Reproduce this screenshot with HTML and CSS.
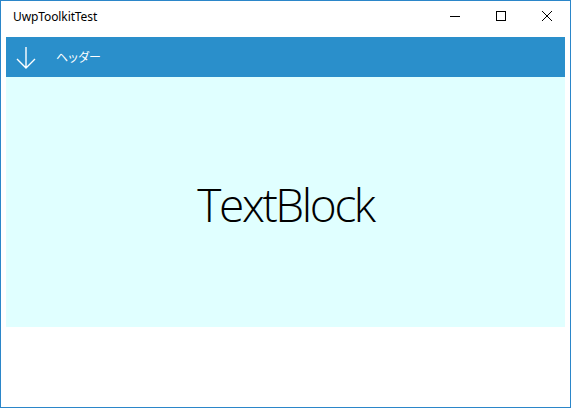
FILE: index.html
```html
<!DOCTYPE html>
<html lang="ja">
<head>
  <meta charset="UTF-8" />
  <title>UwpToolkitTest</title>
  <link rel="stylesheet" href="styles.css">
</head>
<body>
  <div class="window">
    <!-- title bar -->
    <div class="titlebar">
      <span class="title">UwpToolkitTest</span>
      <div class="controls">
        <button class="ctl" aria-label="minimize">
          <svg width="10" height="10" viewBox="0 0 10 10"><path d="M0 5.5H10" stroke="#000" stroke-width="1"/></svg>
        </button>
        <button class="ctl" aria-label="maximize">
          <svg width="10" height="10" viewBox="0 0 10 10"><rect x="0.5" y="0.5" width="9" height="9" fill="none" stroke="#000" stroke-width="1"/></svg>
        </button>
        <button class="ctl" aria-label="close">
          <svg width="10" height="10" viewBox="0 0 10 10"><path d="M0 0L10 10M10 0L0 10" stroke="#000" stroke-width="1"/></svg>
        </button>
      </div>
    </div>

    <!-- page content -->
    <div class="content">
      <div class="header">
        <svg class="arrow" width="20" height="22" viewBox="0 0 20 22">
          <path d="M10 0V21M1 12L10 21L19 12" fill="none" stroke="#fff" stroke-width="1.4"/>
        </svg>
        <span class="header-text">ヘッダー</span>
      </div>
      <div class="body-area">
        <span class="big-text">TextBlock</span>
      </div>
    </div>
  </div>
</body>
</html>
```

FILE: styles.css
```css
/* page */
body {
  margin: 0;
  padding: 0;
  background-color: #ffffff;
  font-family: "Noto Sans", "Liberation Sans", "Noto Sans CJK JP", sans-serif;
}

/* window frame */
.window {
  width: 571px;
  height: 408px;
  box-sizing: border-box;
  border: 1px solid #2b86c9;
  background-color: #ffffff;
  display: flex;
  flex-direction: column;
}

/* title bar */
.titlebar {
  height: 30px;
  display: flex;
  align-items: center;
  justify-content: space-between;
}
.title {
  margin-left: 12px;
  margin-top: 1px;
  font-size: 12px;
  color: #000;
  letter-spacing: -0.1px;
}
.controls {
  display: flex;
  height: 100%;
}
.ctl {
  width: 46px;
  height: 100%;
  border: none;
  padding: 0;
  background: transparent;
  display: flex;
  align-items: center;
  justify-content: center;
}

/* content */
.content {
  padding: 6px 5px 0;
}

/* blue header bar */
.header {
  height: 40px;
  background-color: #2a8fcb;
  display: flex;
  align-items: center;
}
.arrow {
  margin-left: 10px;
  margin-top: 1px;
}
.header-text {
  margin-left: 20px;
  margin-bottom: 2px;
  font-family: "Noto Sans CJK JP", sans-serif;
  font-size: 12px;
  letter-spacing: -1px;
  color: #ffffff;
}

/* light cyan area */
.body-area {
  height: 250px;
  background-color: #e0ffff;
  display: flex;
  align-items: center;
  justify-content: center;
}
.big-text {
  font-family: "Open Sans", sans-serif;
  font-weight: 300;
  font-size: 46px;
  letter-spacing: -2.4px;
  color: #000;
  margin-top: 4px;
}
```
